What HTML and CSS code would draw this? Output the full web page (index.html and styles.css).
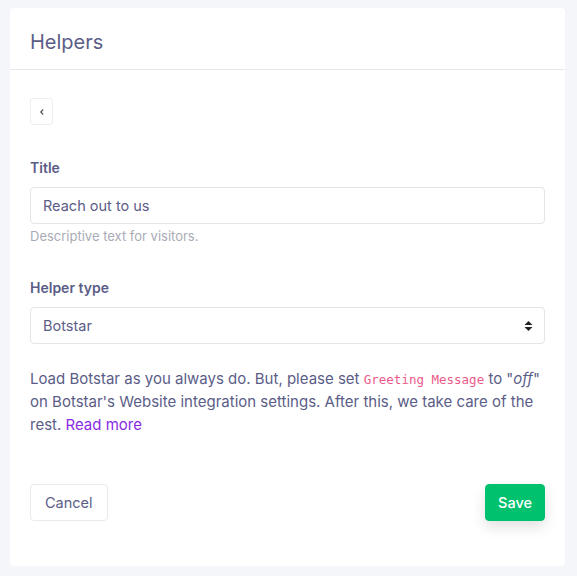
FILE: index.html
```html
<!DOCTYPE html>
<html lang="en">
<head>
  <meta charset="UTF-8" />
  <meta name="viewport" content="width=device-width, initial-scale=1.0"/>
  <title>Helpers</title>
  <link rel="stylesheet" href="styles.css">
</head>
<body>
    <div class="card">
        <div class="card-header">
            <h1>Helpers</h1>
        </div>

        <div class="card-body">
            <button class="back-button" aria-label="Back">
                <svg width="8" height="8" viewBox="0 0 8 8"><path d="M5.2 1.5 L2.8 4 L5.2 6.5" fill="none" stroke="#555" stroke-width="1.2"/></svg>
            </button>

            <div class="field">
                <label for="title">Title</label>
                <input id="title" type="text" value="Reach out to us" />
                <p class="help">Descriptive text for visitors.</p>
            </div>

            <div class="field">
                <label for="type">Helper type</label>
                <div class="select">
                    <span>Botstar</span>
                    <svg width="9" height="12" viewBox="0 0 9 12"><path d="M4.5 1 L8.5 5 H0.5 Z M4.5 11 L8.5 7 H0.5 Z" fill="#222"/></svg>
                </div>
            </div>

            <p class="note">
                Load Botstar as you always do. But, please set <code>Greeting Message</code> to "<em>off</em>"
                on Botstar's Website integration settings. After this, we take care of the rest. <a href="#">Read more</a>
            </p>

            <div class="actions">
                <button class="btn">Cancel</button>
                <button class="btn btn-save">Save</button>
            </div>
        </div>
    </div>
</body>
</html>
```

FILE: styles.css
```css
* {
    margin: 0;
    padding: 0;
    box-sizing: border-box;
}

body {
    background-color: #f4f6f9;
    font-family: 'Inter', 'Noto Sans', sans-serif;
    color: #5b5d87;
    padding: 8px 12px 10px 10px;
}

.card {
    background-color: #fff;
    border-radius: 4px;
    height: 558px;
}

.card-header {
    height: 62px;
    border-bottom: 1px solid #e6e8ec;
    padding: 0 20px;
    display: flex;
    align-items: center;
}

.card-header h1 {
    font-size: 20px;
    font-weight: 400;
    color: #5b5d87;
    margin-top: 6px;
}

.card-body {
    padding: 28px 20px 0;
}

.back-button {
    width: 23px;
    height: 27px;
    background: #fff;
    border: 1px solid #eceef2;
    border-radius: 3px;
    display: flex;
    align-items: center;
    justify-content: center;
    cursor: pointer;
}

.field {
    margin-top: 34px;
}

.field + .field {
    margin-top: 35px;
}

.field label {
    display: block;
    font-size: 14px;
    font-weight: 600;
    color: #5b5d87;
    margin-bottom: 11px;
}

.field input,
.select {
    width: 100%;
    height: 37px;
    border: 1px solid #e3e5ea;
    border-radius: 4px;
    padding: 0 12px;
    font-family: inherit;
    font-size: 14.5px;
    color: #5b5d87;
}

.select {
    display: flex;
    align-items: center;
    justify-content: space-between;
    padding-right: 11px;
}

.help {
    font-size: 13px;
    color: #a9abb6;
    margin-top: 4px;
}

.note {
    margin-top: 23px;
    font-size: 15px;
    line-height: 23px;
    color: #5b5d87;
}

.note code {
    font-family: 'DejaVu Sans Mono', monospace;
    font-size: 12.5px;
    line-height: 1;
    color: #ec5a8b;
}

.note a {
    color: #8a2be2;
    text-decoration: none;
}

.actions {
    margin-top: 48px;
    display: flex;
    justify-content: space-between;
}

.btn {
    height: 37px;
    padding: 0 14px;
    background: #fff;
    border: 1px solid #e8eaee;
    border-radius: 4px;
    font-family: inherit;
    font-size: 14.5px;
    color: #5b5d87;
    cursor: pointer;
}

.btn-save {
    background-color: #00c16e;
    border-color: #00c16e;
    color: #fff;
    font-weight: 500;
    padding: 0 12px;
    box-shadow: 0 6px 14px rgba(0, 0, 0, 0.12);
}
```
